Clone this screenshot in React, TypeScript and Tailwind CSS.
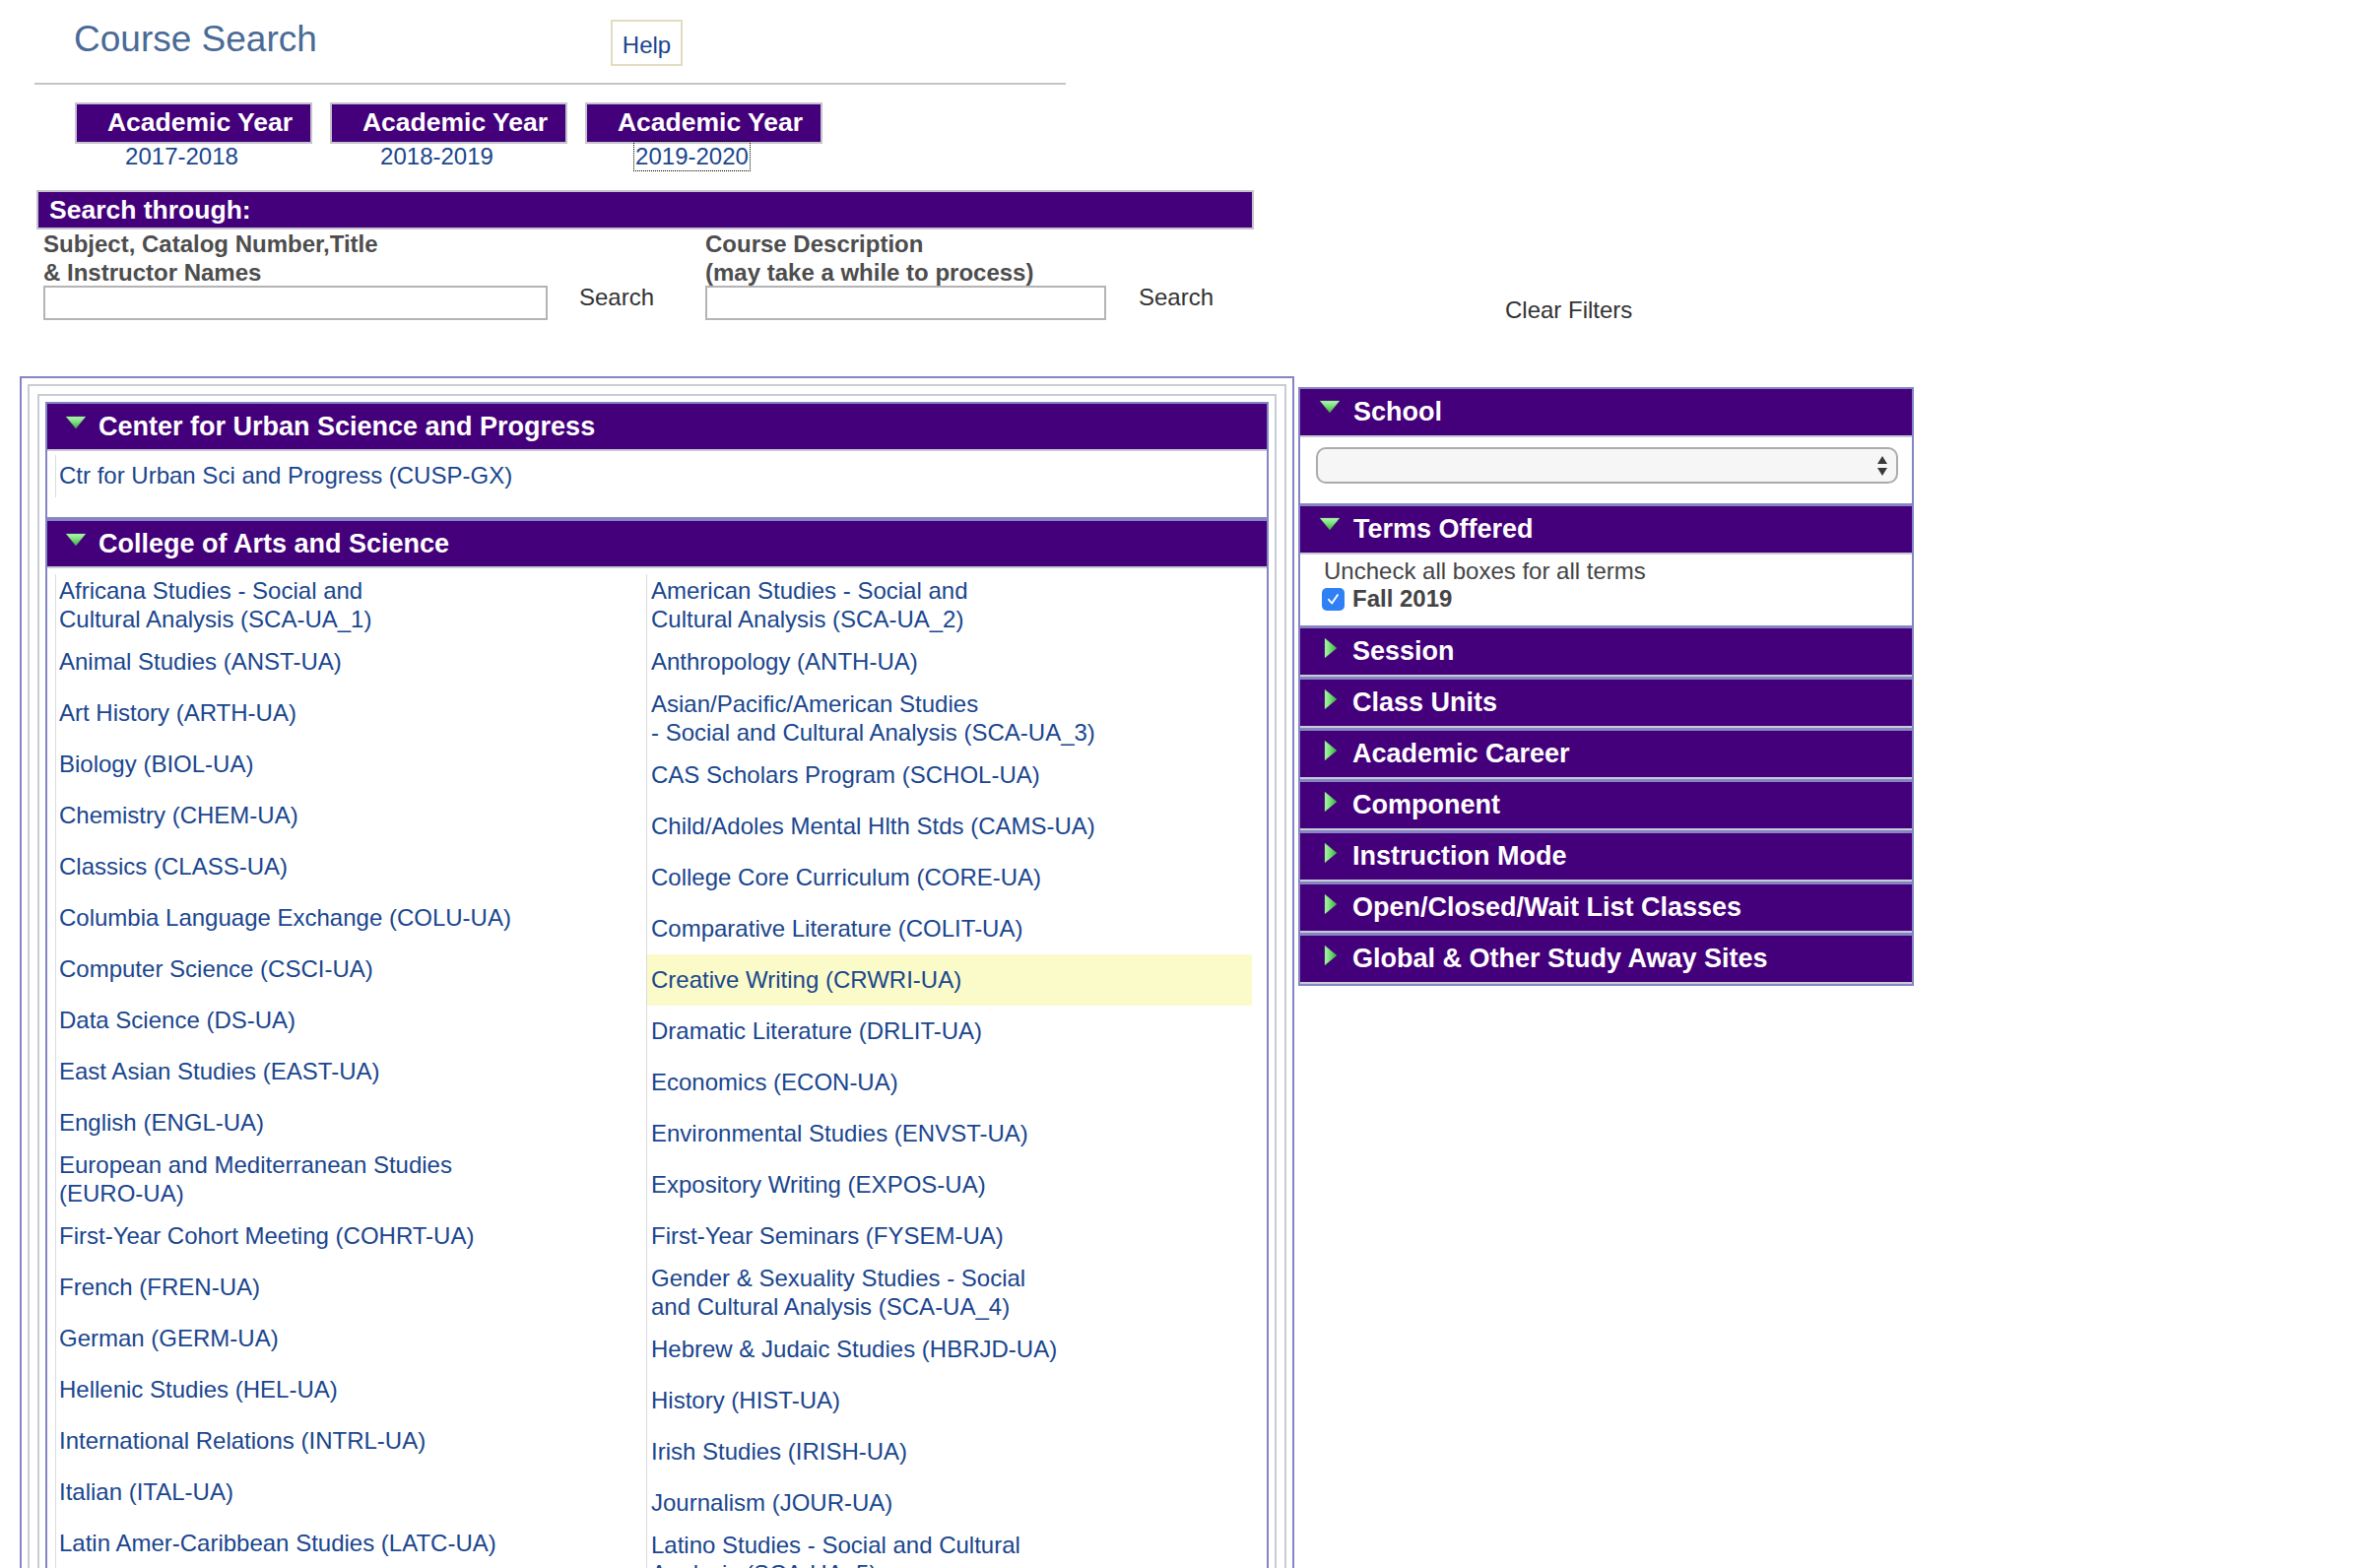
const purple = 'bg-[#44007a]'

type Item = { lines: string[]; hl?: boolean }

const leftCol: Item[] = [
  { lines: ['Africana Studies - Social and', 'Cultural Analysis (SCA-UA_1)'] },
  { lines: ['Animal Studies (ANST-UA)'] },
  { lines: ['Art History (ARTH-UA)'] },
  { lines: ['Biology (BIOL-UA)'] },
  { lines: ['Chemistry (CHEM-UA)'] },
  { lines: ['Classics (CLASS-UA)'] },
  { lines: ['Columbia Language Exchange (COLU-UA)'] },
  { lines: ['Computer Science (CSCI-UA)'] },
  { lines: ['Data Science (DS-UA)'] },
  { lines: ['East Asian Studies (EAST-UA)'] },
  { lines: ['English (ENGL-UA)'] },
  { lines: ['European and Mediterranean Studies', '(EURO-UA)'] },
  { lines: ['First-Year Cohort Meeting (COHRT-UA)'] },
  { lines: ['French (FREN-UA)'] },
  { lines: ['German (GERM-UA)'] },
  { lines: ['Hellenic Studies (HEL-UA)'] },
  { lines: ['International Relations (INTRL-UA)'] },
  { lines: ['Italian (ITAL-UA)'] },
  { lines: ['Latin Amer-Caribbean Studies (LATC-UA)'] },
  { lines: ['Linguistics (LING-UA)'] },
  { lines: ['Mathematics (MATH-UA)'] },
]

const rightCol: Item[] = [
  { lines: ['American Studies - Social and', 'Cultural Analysis (SCA-UA_2)'] },
  { lines: ['Anthropology (ANTH-UA)'] },
  { lines: ['Asian/Pacific/American Studies', '- Social and Cultural Analysis (SCA-UA_3)'] },
  { lines: ['CAS Scholars Program (SCHOL-UA)'] },
  { lines: ['Child/Adoles Mental Hlth Stds (CAMS-UA)'] },
  { lines: ['College Core Curriculum (CORE-UA)'] },
  { lines: ['Comparative Literature (COLIT-UA)'] },
  { lines: ['Creative Writing (CRWRI-UA)'], hl: true },
  { lines: ['Dramatic Literature (DRLIT-UA)'] },
  { lines: ['Economics (ECON-UA)'] },
  { lines: ['Environmental Studies (ENVST-UA)'] },
  { lines: ['Expository Writing (EXPOS-UA)'] },
  { lines: ['First-Year Seminars (FYSEM-UA)'] },
  { lines: ['Gender & Sexuality Studies - Social', 'and Cultural Analysis (SCA-UA_4)'] },
  { lines: ['Hebrew & Judaic Studies (HBRJD-UA)'] },
  { lines: ['History (HIST-UA)'] },
  { lines: ['Irish Studies (IRISH-UA)'] },
  { lines: ['Journalism (JOUR-UA)'] },
  { lines: ['Latino Studies - Social and Cultural', 'Analysis (SCA-UA_5)'] },
  { lines: ['Medieval and Renaissance Studies (MEDI-UA)'] },
]

const collapsed = [
  'Session',
  'Class Units',
  'Academic Career',
  'Component',
  'Instruction Mode',
  'Open/Closed/Wait List Classes',
  'Global & Other Study Away Sites',
]

function TriDown({ className = '' }: { className?: string }) {
  return (
    <svg width="22" height="14" viewBox="0 0 22 14" className={className}>
      <defs>
        <linearGradient id="tri-down" x1="0" y1="0" x2="0" y2="1">
          <stop offset="0" stopColor="#b4f7b4" />
          <stop offset="0.5" stopColor="#74dd74" />
          <stop offset="1" stopColor="#3daa3d" />
        </linearGradient>
      </defs>
      <polygon points="1,1 21,1 11,13" fill="url(#tri-down)" stroke="#5ccc5c" strokeWidth="0.6" strokeOpacity="0.5" />
    </svg>
  )
}

function TriRight({ className = '' }: { className?: string }) {
  return (
    <svg width="14" height="22" viewBox="0 0 14 22" className={className}>
      <defs>
        <linearGradient id="tri-right" x1="0" y1="0" x2="1" y2="0">
          <stop offset="0" stopColor="#b0f5b0" />
          <stop offset="0.5" stopColor="#70da70" />
          <stop offset="1" stopColor="#3daa3d" />
        </linearGradient>
      </defs>
      <polygon points="1,1 13,11 1,21" fill="url(#tri-right)" stroke="#5ccc5c" strokeWidth="0.6" strokeOpacity="0.5" />
    </svg>
  )
}

function ListColumn({ items, pad }: { items: Item[]; pad: string }) {
  return (
    <div className="flex flex-col border-l border-[#dcdcdc]">
      {items.map((it) => (
        <div
          key={it.lines.join(' ')}
          className={`min-h-[52px] py-[3px] flex items-center ${pad} ${it.hl ? 'bg-[#fbfbc9]' : ''}`}
        >
          <a className="text-[24px] leading-[28.5px] text-[#1a468e] cursor-pointer">
            {it.lines.map((l, i) => (
              <span key={i} className="block">
                {l}
              </span>
            ))}
          </a>
        </div>
      ))}
    </div>
  )
}

function SectionHeader({ title }: { title: string }) {
  return (
    <div className={`h-[48px] ${purple} border-b-2 border-[#c8ccd4] flex`}>
      <TriDown className="ml-[18px] mt-[12px] shrink-0" />
      <span className="ml-[12px] self-center text-[27px] leading-none font-bold text-white">{title}</span>
    </div>
  )
}

export default function App() {
  return (
    <div className="min-h-screen w-[2400px] bg-white font-['Liberation_Sans',Arial,sans-serif] pb-[40px]">
      {/* title bar */}
      <div className="ml-[35px] w-[1047px] h-[86px] border-b-2 border-[#c4c4c4] flex items-start">
        <h1 className="ml-[40px] mt-[19px] w-[545px] text-[37px] leading-[42px] text-[#4a6a96]">Course Search</h1>
        <button className="mt-[20px] w-[73px] h-[47px] border-2 border-[#e2dcc2] text-[24px] leading-none text-[#1a468e] pt-[4px]">
          Help
        </button>
      </div>

      {/* academic year tabs */}
      <div className="ml-[76px] mt-[18px] flex gap-[18px]">
        {['2017-2018', '2018-2019', '2019-2020'].map((y, i) => (
          <div key={y} className="w-[241px]">
            <div className={`h-[42px] ${purple} border-2 border-[#c4c4cc] flex items-center justify-center pl-[13px] text-[26.5px] font-bold text-white`}>
              Academic Year
            </div>
            <div className="h-[26px] text-center pr-[24px] text-[24px] leading-[26px] text-[#1a468e]">
              <span className={i === 2 ? 'inline-block px-[1px] leading-[29px] -mt-[2px] outline-1 outline-dotted outline-black' : ''}>
                {y}
              </span>
            </div>
          </div>
        ))}
      </div>

      {/* search through */}
      <div className={`ml-[37px] mt-[21px] w-[1236px] h-[40px] ${purple} border-2 border-[#c4c4cc] pl-[11px] text-[26.5px] leading-[36px] font-bold text-white`}>
        Search through:
      </div>

      <div className="ml-[44px] h-[92px] flex items-start">
        <div className="w-[512px]">
          <div className="text-[24px] leading-[29px] font-bold text-[#4d4d4d]">
            Subject, Catalog Number,Title
            <br />& Instructor Names
          </div>
          <input className="-mt-[1px] block w-[512px] h-[35px] border-2 border-[#b4b4b4] bg-white" />
        </div>
        <div className="w-[160px] pl-[32px] mt-[55px] text-[24px] leading-[28px] text-[#333]">Search</div>
        <div className="w-[407px]">
          <div className="text-[24px] leading-[29px] font-bold text-[#4d4d4d]">
            Course Description
            <br />
            (may take a while to process)
          </div>
          <input className="-mt-[1px] block w-[407px] h-[35px] border-2 border-[#b4b4b4] bg-white" />
        </div>
        <div className="w-[405px] pl-[33px] mt-[55px] text-[24px] leading-[28px] text-[#333]">Search</div>
        <div className="mt-[68px] text-[24px] leading-[28px] text-[#333]">Clear Filters</div>
      </div>

      {/* panels */}
      <div className="mt-[57px] flex items-start">
        {/* left: course list */}
        <div className="ml-[20px] w-[1294px] border-2 border-[#8585c4] pt-[6px] px-[6px]">
          <div className="border-2 border-[#c8ccd4] pt-[8px] px-[8px]">
            <div className="border-2 border-[#c8ccd4] pt-[6px] px-[6px]">
              <div className="border-2 border-[#8585c4]">
                <SectionHeader title="Center for Urban Science and Progress" />
                <div className="pt-[4px] pb-[20px] pl-[8px]">
                  <div className="min-h-[43px] border-l border-[#dcdcdc] pl-[3px] flex items-center">
                    <a className="text-[24px] leading-[28.5px] text-[#1a468e]">Ctr for Urban Sci and Progress (CUSP-GX)</a>
                  </div>
                </div>
              </div>
              <div className="border-2 border-[#8585c4]">
                <SectionHeader title="College of Arts and Science" />
                <div className="pt-[6px] pl-[8px] pb-[8px] grid grid-cols-[600px_615px]">
                  <ListColumn items={leftCol} pad="pl-[3px]" />
                  <ListColumn items={rightCol} pad="pl-[4px]" />
                </div>
              </div>
            </div>
          </div>
        </div>

        {/* right: filters */}
        <div className="ml-[4px] mt-[11px] w-[625px] border-2 border-[#8585c4]">
          <div className={`h-[49px] ${purple} border-b-2 border-[#c8ccd4] flex`}>
            <TriDown className="ml-[19px] mt-[11px] shrink-0" />
            <span className="ml-[13px] self-center text-[27px] leading-none font-bold text-white">School</span>
          </div>
          <div className="h-[67px] pl-[16px] pt-[10px]">
            <div className="w-[591px] h-[37px] rounded-[10px] border-2 border-[#ababab] bg-[#f6f6f6] flex items-center justify-end pr-[8px]">
              <svg width="12" height="22" viewBox="0 0 12 22">
                <polygon points="6,1 11,9 1,9" fill="#3a3a3a" />
                <polygon points="1,13 11,13 6,21" fill="#3a3a3a" />
              </svg>
            </div>
          </div>

          <div className="border-t-[3px] border-[#8585c4]">
            <div className={`h-[49px] ${purple} border-b-2 border-[#c8ccd4] flex`}>
              <TriDown className="ml-[19px] mt-[11px] shrink-0" />
              <span className="ml-[13px] self-center text-[27px] leading-none font-bold text-white">Terms Offered</span>
            </div>
            <div className="h-[72px] pl-[22px] pt-[3px] text-[24px] leading-[28px] text-[#444]">
              <div className="ml-[2px]">Uncheck all boxes for all terms</div>
              <label className="flex items-center">
                <span className="w-[23px] h-[23px] rounded-[5px] bg-[#2f7ff5] flex items-center justify-center">
                  <svg width="15" height="15" viewBox="0 0 15 15">
                    <path d="M3 7.8 L6.2 11.5 L12 3" fill="none" stroke="white" strokeWidth="1.9" strokeLinecap="round" strokeLinejoin="round" />
                  </svg>
                </span>
                <span className="ml-[8px] font-bold">Fall 2019</span>
              </label>
            </div>
          </div>

          {collapsed.map((t) => (
            <div key={t} className="border-t-[3px] border-[#8585c4]">
              <div className={`h-[49px] ${purple} border-b-2 border-[#c8ccd4] flex`}>
                <TriRight className="ml-[24px] mt-[9px] shrink-0" />
                <span className="ml-[15px] self-center text-[27px] leading-none font-bold text-white">{t}</span>
              </div>
            </div>
          ))}
        </div>
      </div>
    </div>
  )
}
